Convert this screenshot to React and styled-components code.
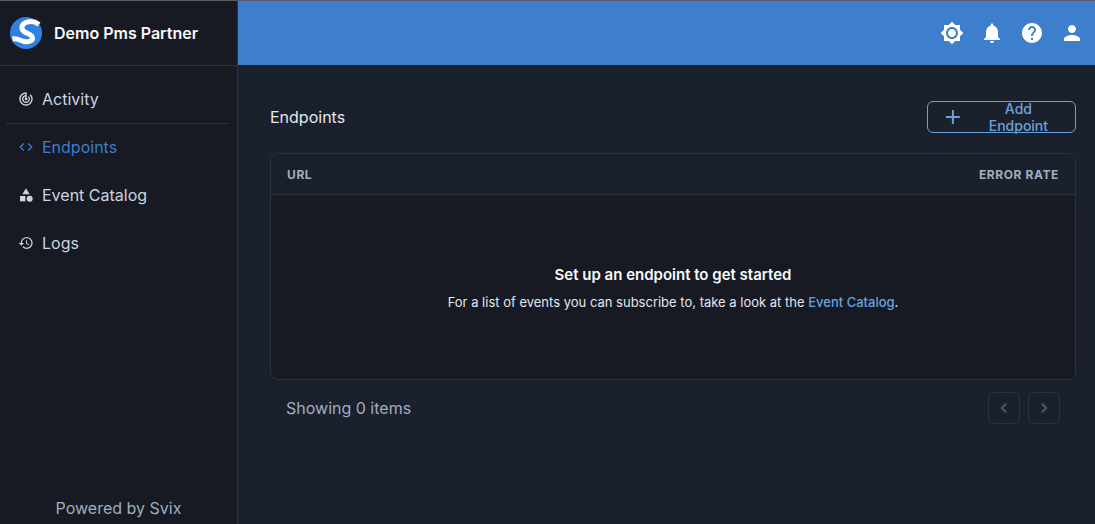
import React from 'react'
import styled, { createGlobalStyle } from 'styled-components'
import {
  MdBrightness7,
  MdNotifications,
  MdHelp,
  MdPerson,
  MdTrackChanges,
  MdCode,
  MdCategory,
  MdHistory,
  MdChevronLeft,
  MdChevronRight,
  MdAdd,
} from 'react-icons/md'

const GlobalStyle = createGlobalStyle`
  html, body {
    margin: 0;
    padding: 0;
    background: #1a202c;
    font-family: Inter, "Liberation Sans", sans-serif;
  }
  * { box-sizing: border-box; }
`

const Logo = () => (
  <svg width="32" height="32" viewBox="0 0 32 32">
    <circle cx="16" cy="16" r="16" fill="#3182e0" />
    <path
      d="M29 7.5C25 4.5 20 4 16 5.5C11.5 7.2 10.5 11.5 14 14.5C17 17 22 17 22.5 21C22.8 24 18 25.5 14 24.5C10 23.5 7 21 2.5 22"
      fill="none"
      stroke="#fff"
      strokeWidth="5"
    />
  </svg>
)

const navItems = [
  { label: 'Activity', icon: <MdTrackChanges />, divider: true },
  { label: 'Endpoints', icon: <MdCode />, active: true },
  { label: 'Event Catalog', icon: <MdCategory /> },
  { label: 'Logs', icon: <MdHistory /> },
]

const App = () => {
  return (
    <Page>
      <GlobalStyle />
      <Sidebar>
        <Brand>
          <Logo />
          <BrandName>Demo Pms Partner</BrandName>
        </Brand>
        <Nav>
          {navItems.map((item) => (
            <React.Fragment key={item.label}>
              <NavItem $active={item.active}>
                <NavIcon>{item.icon}</NavIcon>
                {item.label}
              </NavItem>
              {item.divider && <NavDivider />}
            </React.Fragment>
          ))}
        </Nav>
        <Powered>Powered by Svix</Powered>
      </Sidebar>
      <Main>
        <Header>
          <HeaderIcon><MdBrightness7 /></HeaderIcon>
          <HeaderIcon><MdNotifications /></HeaderIcon>
          <HeaderIcon><MdHelp /></HeaderIcon>
          <HeaderIcon><MdPerson /></HeaderIcon>
        </Header>
        <Content>
          <TitleRow>
            <Title>Endpoints</Title>
            <AddButton>
              <MdAdd size={24} />
              Add Endpoint
            </AddButton>
          </TitleRow>
          <Card>
            <CardHead>
              <span>URL</span>
              <span>ERROR RATE</span>
            </CardHead>
            <Empty>
              <EmptyTitle>Set up an endpoint to get started</EmptyTitle>
              <EmptyText>
                For a list of events you can subscribe to, take a look at the{' '}
                <EmptyLink>Event Catalog</EmptyLink>.
              </EmptyText>
            </Empty>
          </Card>
          <Pager>
            <PagerText>Showing 0 items</PagerText>
            <PagerButtons>
              <PageButton><MdChevronLeft /></PageButton>
              <PageButton><MdChevronRight /></PageButton>
            </PagerButtons>
          </Pager>
        </Content>
      </Main>
    </Page>
  )
}

const Page = styled.div`
  display: flex;
  height: 524px;
  overflow: hidden;
  border-top: 1px solid #5b5d60;
`

const Sidebar = styled.aside`
  width: 238px;
  flex: none;
  display: flex;
  flex-direction: column;
  background: #171923;
  border-right: 1px solid #2d3240;
`

const Brand = styled.div`
  height: 65px;
  flex: none;
  display: flex;
  align-items: center;
  gap: 12px;
  padding: 0 10px;
  border-bottom: 1px solid #2d3240;
`

const BrandName = styled.div`
  color: #f7fafc;
  font-size: 16px;
  font-weight: 600;
`

const Nav = styled.nav`
  display: flex;
  flex-direction: column;
  padding: 9px 8px 0 6px;
`

const NavItem = styled.div`
  height: 48px;
  display: flex;
  align-items: center;
  gap: 8px;
  padding-left: 12px;
  font-size: 16px;
  color: ${(p) => (p.$active ? '#3b7fcc' : '#cbd5e0')};
`

const NavIcon = styled.span`
  display: flex;
  font-size: 16px;
  svg { display: block; }
`

const NavDivider = styled.div`
  height: 1px;
  margin-bottom: -1px;
  background: #2d3240;
`

const Powered = styled.div`
  margin-top: auto;
  padding-bottom: 6px;
  text-align: center;
  color: #a0aec0;
  font-size: 16px;
`

const Main = styled.main`
  flex: 1;
  min-width: 0;
  display: flex;
  flex-direction: column;
`

const Header = styled.header`
  height: 64px;
  flex: none;
  display: flex;
  align-items: center;
  justify-content: flex-end;
  gap: 16px;
  padding-right: 11px;
  background: #3d7fcc;
`

const HeaderIcon = styled.span`
  display: flex;
  color: #fff;
  font-size: 24px;
`

const Content = styled.div`
  padding: 36px 19px 0 32px;
`

const TitleRow = styled.div`
  display: flex;
  align-items: center;
  justify-content: space-between;
  margin-bottom: 20px;
`

const Title = styled.h1`
  margin: 0;
  color: #e2e8f0;
  font-size: 16px;
  font-weight: 400;
`

const AddButton = styled.button`
  height: 32px;
  width: 149px;
  display: flex;
  align-items: center;
  gap: 9px;
  padding: 0 12px 0 13px;
  background: transparent;
  border: 1px solid #6ba2dc;
  border-radius: 6px;
  color: #6ba2dc;
  font-family: inherit;
  font-size: 14px;
  font-weight: 500;
`

const Card = styled.section`
  background: #171923;
  border: 1px solid #2d3240;
  border-radius: 8px;
  overflow: hidden;
`

const CardHead = styled.div`
  height: 41px;
  display: flex;
  align-items: center;
  justify-content: space-between;
  padding: 0 16px;
  background: #1a202c;
  border-bottom: 1px solid #2d3240;
  color: #a0aec0;
  font-size: 12px;
  font-weight: 700;
  letter-spacing: 0.05em;
`

const Empty = styled.div`
  height: 184px;
  display: flex;
  flex-direction: column;
  align-items: center;
  justify-content: center;
  gap: 10px;
`

const EmptyTitle = styled.div`
  color: #f7fafc;
  font-size: 15px;
  font-weight: 600;
`

const EmptyText = styled.div`
  color: #e2e8f0;
  font-size: 13px;
`

const EmptyLink = styled.span`
  color: #63a4e6;
  font-weight: 500;
`

const Pager = styled.div`
  display: flex;
  align-items: center;
  justify-content: space-between;
  padding: 12px 16px;
`

const PagerText = styled.div`
  color: #a0aec0;
  font-size: 16px;
`

const PagerButtons = styled.div`
  display: flex;
  gap: 8px;
`

const PageButton = styled.button`
  width: 32px;
  height: 32px;
  display: flex;
  align-items: center;
  justify-content: center;
  padding: 0;
  background: transparent;
  border: 1px solid #2d3240;
  border-radius: 6px;
  color: #5a6070;
  font-size: 20px;
`

export default App
